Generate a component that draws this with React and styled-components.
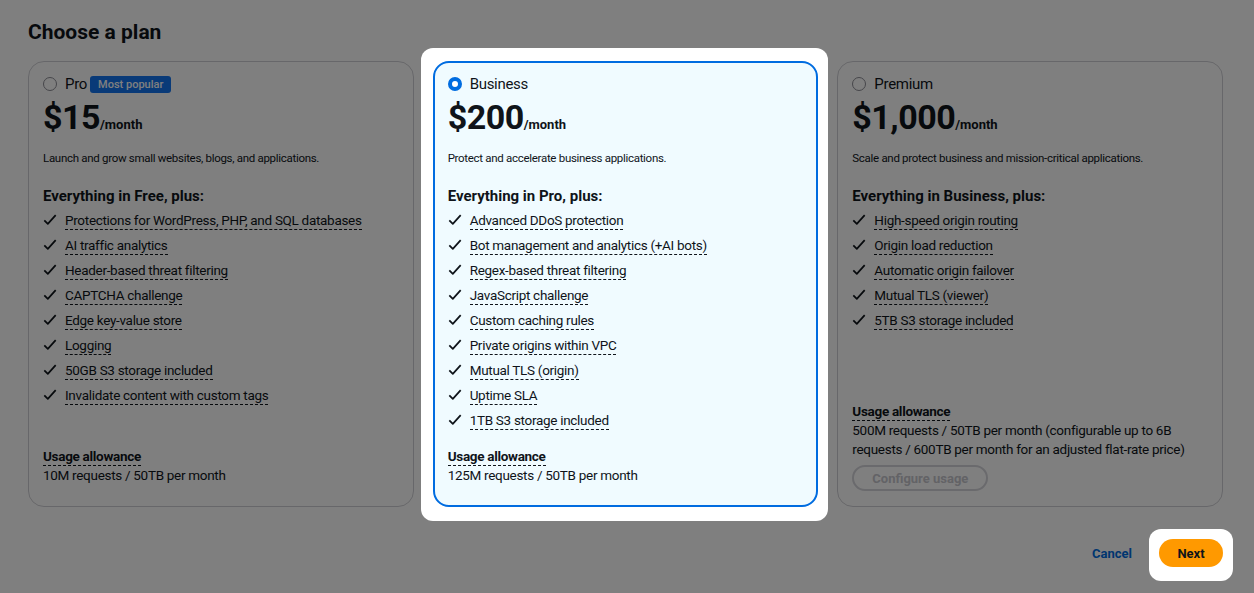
import styled, { createGlobalStyle, css } from 'styled-components';

const GlobalStyle = createGlobalStyle`
  body {
    margin: 0;
    background: #ffffff;
    font-family: Roboto, "Noto Sans", sans-serif;
    color: #0f141a;
  }
`;

const Overlay = styled.div`
  position: fixed;
  inset: 0;
  background: rgba(0, 0, 0, 0.5);
  z-index: 1;
`;

const Page = styled.div`
  min-height: 100vh;
  box-sizing: border-box;
  padding: 20px 31px 0 28px;
`;

const Title = styled.h2`
  margin: 0 0 16px;
  font-size: 21px;
  line-height: 25px;
  font-weight: 700;
`;

const Plans = styled.div`
  display: grid;
  grid-template-columns: repeat(3, 1fr);
  gap: 19px;
`;

const Spotlight = styled.div`
  position: relative;
  z-index: 2;
  background: #ffffff;
  border-radius: 12px;
  padding: ${(p) => p.$pad};
  margin: ${(p) => p.$margin};
  display: flex;
`;

const Card = styled.div`
  flex: 1;
  display: flex;
  flex-direction: column;
  box-sizing: border-box;
  height: 100%;
  border-radius: 16px;
  border: 1px solid #cfcfd4;
  padding: 11px 14px 21px;
  background: #ffffff;

  ${(p) =>
    p.$selected &&
    css`
      border: 2px solid #006ce0;
      padding: 10px 13px 20px;
      background: #f0fbff;
    `}
`;

const Head = styled.div`
  display: flex;
  align-items: center;
  gap: 8px;
  height: 22px;
`;

const Radio = styled.span`
  width: 14px;
  height: 14px;
  box-sizing: border-box;
  border-radius: 50%;
  border: ${(p) => (p.$checked ? '4px solid #006ce0' : '1px solid #8c8c94')};
  background: #ffffff;
  flex-shrink: 0;
`;

const PlanName = styled.span`
  font-size: 15px;
  line-height: 20px;
  letter-spacing: -0.3px;
`;

const Badge = styled.span`
  background: #1375f0;
  color: #ffffff;
  font-size: 11px;
  font-weight: 500;
  line-height: 17px;
  padding: 0 8px;
  border-radius: 3px;
  margin-left: -5px;
`;

const Price = styled.div`
  display: flex;
  align-items: baseline;
  margin-top: 2px;
`;

const Amount = styled.span`
  font-size: 34px;
  line-height: 40px;
  font-weight: 700;
  letter-spacing: -0.5px;
`;

const Per = styled.span`
  font-size: 13px;
  font-weight: 700;
`;

const Description = styled.p`
  margin: 13px 0 0;
  font-size: 11.5px;
  line-height: 16px;
  letter-spacing: -0.3px;
`;

const ListTitle = styled.h3`
  margin: 20px 0 4px;
  font-size: 15px;
  line-height: 20px;
  font-weight: 700;
`;

const Features = styled.ul`
  list-style: none;
  margin: 0;
  padding: 0;
  display: flex;
  flex-direction: column;
  gap: 5px;
`;

const Feature = styled.li`
  display: flex;
  align-items: center;
  gap: 8px;
  height: 20px;
`;

const Dotted = styled.span`
  font-size: 13.5px;
  line-height: 18px;
  letter-spacing: -0.3px;
  border-bottom: 1px dashed currentColor;
  font-weight: ${(p) => (p.$bold ? 700 : 400)};
`;

const Usage = styled.div`
  margin-top: auto;
  padding-top: 17px;
  display: flex;
  flex-direction: column;
  align-items: flex-start;
`;

const UsageText = styled.div`
  font-size: 13.5px;
  line-height: 19px;
  letter-spacing: -0.3px;
`;

const ConfigButton = styled.button`
  margin-top: 6px;
  margin-bottom: -6px;
  height: 26px;
  padding: 0 18px;
  border-radius: 16px;
  border: 2px solid #d5d5da;
  background: #ffffff;
  color: #c6c6cd;
  font-family: inherit;
  font-size: 13px;
  font-weight: 700;
`;

const Actions = styled.div`
  display: flex;
  justify-content: flex-end;
  align-items: center;
  gap: 27px;
  margin-top: 32px;
`;

const LinkButton = styled.button`
  border: none;
  background: none;
  padding: 0;
  color: #006ce0;
  font-family: inherit;
  font-size: 13px;
  font-weight: 700;
`;

const PrimaryButton = styled.button`
  height: 28px;
  width: 64px;
  padding: 0;
  border: none;
  border-radius: 20px;
  background: #ff9900;
  color: #0f141a;
  font-family: inherit;
  font-size: 13px;
  font-weight: 700;
`;

function Check() {
  return (
    <svg width="14" height="14" viewBox="0 0 16 16" fill="none">
      <path d="M1.5 8.5l4 4 9-10" stroke="#0f141a" strokeWidth="2" strokeLinejoin="round" />
    </svg>
  );
}

const plans = [
  {
    name: 'Pro',
    badge: 'Most popular',
    price: '$15',
    description: 'Launch and grow small websites, blogs, and applications.',
    listTitle: 'Everything in Free, plus:',
    features: [
      'Protections for WordPress, PHP, and SQL databases',
      'AI traffic analytics',
      'Header-based threat filtering',
      'CAPTCHA challenge',
      'Edge key-value store',
      'Logging',
      '50GB S3 storage included',
      'Invalidate content with custom tags',
    ],
    usage: '10M requests / 50TB per month',
  },
  {
    name: 'Business',
    price: '$200',
    selected: true,
    description: 'Protect and accelerate business applications.',
    listTitle: 'Everything in Pro, plus:',
    features: [
      'Advanced DDoS protection',
      'Bot management and analytics (+AI bots)',
      'Regex-based threat filtering',
      'JavaScript challenge',
      'Custom caching rules',
      'Private origins within VPC',
      'Mutual TLS (origin)',
      'Uptime SLA',
      '1TB S3 storage included',
    ],
    usage: '125M requests / 50TB per month',
  },
  {
    name: 'Premium',
    price: '$1,000',
    description: 'Scale and protect business and mission-critical applications.',
    listTitle: 'Everything in Business, plus:',
    features: [
      'High-speed origin routing',
      'Origin load reduction',
      'Automatic origin failover',
      'Mutual TLS (viewer)',
      '5TB S3 storage included',
    ],
    usage:
      '500M requests / 50TB per month (configurable up to 6B requests / 600TB per month for an adjusted flat-rate price)',
    configurable: true,
  },
];

function PlanCard({ plan }) {
  return (
    <Card $selected={plan.selected}>
      <Head>
        <Radio $checked={plan.selected} />
        <PlanName>{plan.name}</PlanName>
        {plan.badge && <Badge>{plan.badge}</Badge>}
      </Head>
      <Price>
        <Amount>{plan.price}</Amount>
        <Per>/month</Per>
      </Price>
      <Description>{plan.description}</Description>
      <ListTitle>{plan.listTitle}</ListTitle>
      <Features>
        {plan.features.map((f) => (
          <Feature key={f}>
            <Check />
            <Dotted>{f}</Dotted>
          </Feature>
        ))}
      </Features>
      <Usage>
        <Dotted $bold>Usage allowance</Dotted>
        <UsageText>{plan.usage}</UsageText>
        {plan.configurable && <ConfigButton disabled>Configure usage</ConfigButton>}
      </Usage>
    </Card>
  );
}

export default function App() {
  return (
    <>
      <GlobalStyle />
      <Overlay />
      <Page>
        <Title>Choose a plan</Title>
        <Plans>
          {plans.map((plan) =>
            plan.selected ? (
              <Spotlight key={plan.name} $pad="13px 10px 14px 12px" $margin="-13px -10px -14px -12px">
                <PlanCard plan={plan} />
              </Spotlight>
            ) : (
              <PlanCard key={plan.name} plan={plan} />
            )
          )}
        </Plans>
        <Actions>
          <LinkButton>Cancel</LinkButton>
          <Spotlight $pad="10px 10px 14px" $margin="-10px -10px -14px">
            <PrimaryButton>Next</PrimaryButton>
          </Spotlight>
        </Actions>
      </Page>
    </>
  );
}
